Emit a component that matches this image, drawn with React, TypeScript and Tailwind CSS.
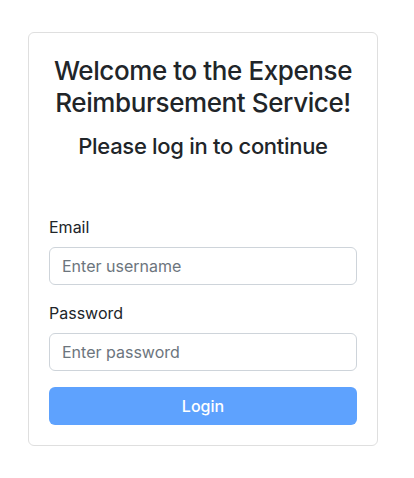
import React from "react";

export default function App() {
  return (
    <div className="min-h-[478px] w-[414px] bg-white font-['Inter',_'Noto_Sans',_sans-serif] text-[#212529]">
      <div className="pt-[32px] pl-[28px]">
        <div className="w-[350px] rounded-[6px] border border-[#dfdfdf] px-[20px] pt-[22px] pb-[20px]">
          <h3 className="text-center text-[26px] leading-[32px] font-medium tracking-[-0.4px]">
            Welcome to the Expense Reimbursement Service!
          </h3>
          <h4 className="mt-[13px] text-center text-[22px] leading-[28px] font-medium tracking-[-0.3px]">
            Please log in to continue
          </h4>
          <form className="mt-[55px]" onSubmit={(e) => e.preventDefault()}>
            <label className="mb-[8px] block text-[16px] leading-[24px]">Email</label>
            <input
              type="text"
              placeholder="Enter username"
              className="mb-[16px] block h-[38px] w-full rounded-[6px] border border-[#ced4da] px-[12px] text-[16px] text-[#212529] outline-none placeholder:text-[#6c757d]"
            />
            <label className="mb-[8px] block text-[16px] leading-[24px]">Password</label>
            <input
              type="password"
              placeholder="Enter password"
              className="mb-[16px] block h-[38px] w-full rounded-[6px] border border-[#ced4da] px-[12px] text-[16px] text-[#212529] outline-none placeholder:text-[#6c757d]"
            />
            <button
              type="submit"
              className="block h-[38px] w-full rounded-[6px] bg-[#5ea2fe] text-[16px] font-medium text-white"
            >
              Login
            </button>
          </form>
        </div>
      </div>
    </div>
  );
}
